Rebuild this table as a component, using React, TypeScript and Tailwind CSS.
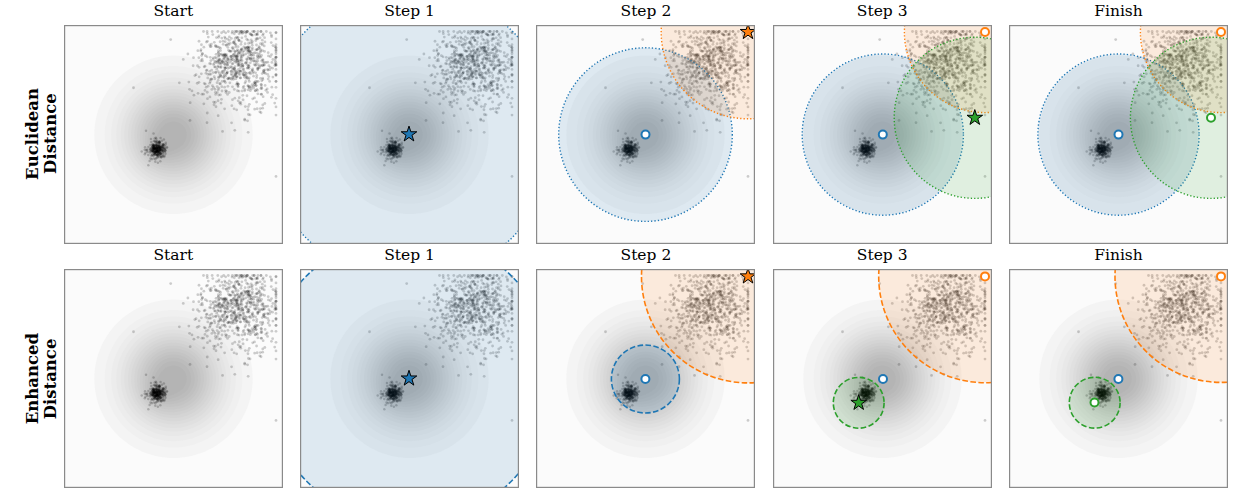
import { useId } from 'react'

const BLUE = '#1f77b4'
const ORANGE = '#ff7f0e'
const GREEN = '#2ca02c'

const SIZE = 219
const C = { x: 109.5, y: 109.8 }
const BLOB = { x: 93.5, y: 124.5 }

type Circle = { cx: number; cy: number; r: number; color: string; line: 'dot' | 'dash' }
type Marker = { x: number; y: number; color: string; kind: 'star' | 'ring' }
type PanelSpec = { title: string; circles: Circle[]; markers: Marker[] }

// seeded random so every render draws the same cloud
const mulberry = (seed: number) => () => {
  seed |= 0
  seed = (seed + 0x6d2b79f5) | 0
  let t = Math.imul(seed ^ (seed >>> 15), 1 | seed)
  t = (t + Math.imul(t ^ (t >>> 7), 61 | t)) ^ t
  return ((t ^ (t >>> 14)) >>> 0) / 4294967296
}
const rand = mulberry(7)
const gauss = () => {
  const u = Math.max(rand(), 1e-9)
  const v = rand()
  return Math.sqrt(-2 * Math.log(u)) * Math.cos(2 * Math.PI * v)
}

const clampX = (x: number) => Math.min(212, Math.max(7, x))
const clampY = (y: number) => Math.max(6.5, Math.min(212, y))

const cloud: [number, number][] = []
for (let i = 0; i < 660; i++) {
  cloud.push([clampX(175 + gauss() * 19), clampY(41 + gauss() * 20)])
}
for (let i = 0; i < 80; i++) {
  cloud.push([clampX(168 + gauss() * 30), clampY(50 + gauss() * 30)])
}

const blob: [number, number][] = []
for (let i = 0; i < 280; i++) {
  blob.push([BLOB.x + gauss() * 4, BLOB.y + gauss() * 3.8])
}
for (let i = 0; i < 25; i++) {
  blob.push([BLOB.x + gauss() * 7.5, BLOB.y + gauss() * 7.5])
}

const SIG = 32.8
const field = (x: number, y: number) => {
  const dx = x - C.x
  const dy = y - C.y
  const bx = x - BLOB.x
  const by = y - BLOB.y
  return Math.exp(-(dx * dx + dy * dy) / (2 * SIG * SIG)) + 0.14 * Math.exp(-(bx * bx + by * by) / (2 * 9 * 9))
}

const LEVELS = 17
const rings = Array.from({ length: LEVELS }, (_, i) => {
  const level = (i + 1) / (LEVELS + 1.5)
  let d = ''
  for (let j = 0; j < 120; j++) {
    const a = (j / 120) * Math.PI * 2
    const ux = Math.cos(a)
    const uy = Math.sin(a)
    let r = 130
    while (r > 0 && field(C.x + r * ux, C.y + r * uy) < level) r -= 0.4
    d += `${j === 0 ? 'M' : 'L'}${(C.x + r * ux).toFixed(2)} ${(C.y + r * uy).toFixed(2)}`
  }
  const g = Math.round(255 * (0.955 - (0.955 - 0.705) * (i / (LEVELS - 1))))
  return { d: d + 'Z', fill: `rgb(${g},${g},${g})` }
})

const starPath = (x: number, y: number, R: number) => {
  const r = R * 0.382
  let d = ''
  for (let i = 0; i < 10; i++) {
    const a = -Math.PI / 2 + (i * Math.PI) / 5
    const rr = i % 2 === 0 ? R : r
    d += `${i === 0 ? 'M' : 'L'}${(x + rr * Math.cos(a)).toFixed(2)} ${(y + rr * Math.sin(a)).toFixed(2)}`
  }
  return d + 'Z'
}

const euclid: PanelSpec[] = [
  { title: 'Start', circles: [], markers: [] },
  {
    title: 'Step 1',
    circles: [{ cx: 109, cy: 109.3, r: 146, color: BLUE, line: 'dot' }],
    markers: [{ x: 109, y: 109.3, color: BLUE, kind: 'star' }],
  },
  {
    title: 'Step 2',
    circles: [
      { cx: 109.5, cy: 109.6, r: 86.8, color: BLUE, line: 'dot' },
      { cx: 212, cy: 7, r: 86.8, color: ORANGE, line: 'dot' },
    ],
    markers: [
      { x: 109.5, y: 109.6, color: BLUE, kind: 'ring' },
      { x: 212, y: 7, color: ORANGE, kind: 'star' },
    ],
  },
  {
    title: 'Step 3',
    circles: [
      { cx: 109.8, cy: 109.6, r: 80.6, color: BLUE, line: 'dot' },
      { cx: 212, cy: 7, r: 80.6, color: ORANGE, line: 'dot' },
      { cx: 201.8, cy: 92.8, r: 80.6, color: GREEN, line: 'dot' },
    ],
    markers: [
      { x: 109.8, y: 109.6, color: BLUE, kind: 'ring' },
      { x: 212, y: 7, color: ORANGE, kind: 'ring' },
      { x: 201.8, y: 92.8, color: GREEN, kind: 'star' },
    ],
  },
  {
    title: 'Finish',
    circles: [
      { cx: 109.5, cy: 109.6, r: 80.6, color: BLUE, line: 'dot' },
      { cx: 212, cy: 7, r: 80.6, color: ORANGE, line: 'dot' },
      { cx: 202, cy: 92.8, r: 80.6, color: GREEN, line: 'dot' },
    ],
    markers: [
      { x: 109.5, y: 109.6, color: BLUE, kind: 'ring' },
      { x: 212, y: 7, color: ORANGE, kind: 'ring' },
      { x: 202, y: 92.8, color: GREEN, kind: 'ring' },
    ],
  },
]

const enhanced: PanelSpec[] = [
  { title: 'Start', circles: [], markers: [] },
  {
    title: 'Step 1',
    circles: [{ cx: 109, cy: 109.5, r: 145, color: BLUE, line: 'dash' }],
    markers: [{ x: 109, y: 109.5, color: BLUE, kind: 'star' }],
  },
  {
    title: 'Step 2',
    circles: [
      { cx: 109.4, cy: 110, r: 34, color: BLUE, line: 'dash' },
      { cx: 212, cy: 7.4, r: 106.5, color: ORANGE, line: 'dash' },
    ],
    markers: [
      { x: 109.4, y: 110, color: BLUE, kind: 'ring' },
      { x: 212, y: 7.4, color: ORANGE, kind: 'star' },
    ],
  },
  {
    title: 'Step 3',
    circles: [
      { cx: 212, cy: 7.4, r: 106.3, color: ORANGE, line: 'dash' },
      { cx: 85.7, cy: 133.8, r: 25.4, color: GREEN, line: 'dash' },
    ],
    markers: [
      { x: 110, y: 110, color: BLUE, kind: 'ring' },
      { x: 212, y: 7.4, color: ORANGE, kind: 'ring' },
      { x: 85.7, y: 133.8, color: GREEN, kind: 'star' },
    ],
  },
  {
    title: 'Finish',
    circles: [
      { cx: 212, cy: 7.4, r: 106, color: ORANGE, line: 'dash' },
      { cx: 85.7, cy: 133.7, r: 25.4, color: GREEN, line: 'dash' },
    ],
    markers: [
      { x: 109.4, y: 110, color: BLUE, kind: 'ring' },
      { x: 212, y: 7.4, color: ORANGE, kind: 'ring' },
      { x: 85.5, y: 133.5, color: GREEN, kind: 'ring' },
    ],
  },
]

const Panel = ({ spec }: { spec: PanelSpec }) => {
  const clip = useId()
  return (
    <div className="flex w-[219px] shrink-0 flex-col">
      <div className="flex h-[24.5px] items-start justify-center pt-[3.5px] text-[15.5px] leading-none">
        {spec.title}
      </div>
      <svg width={SIZE} height={SIZE} viewBox={`0 0 ${SIZE} ${SIZE}`} className="block">
        <defs>
          <clipPath id={clip}>
            <rect x={0} y={0} width={SIZE} height={SIZE} />
          </clipPath>
        </defs>
        <g clipPath={`url(#${clip})`}>
          <rect x={0} y={0} width={SIZE} height={SIZE} fill="#fbfbfb" />
          {rings.map((ring, i) => (
            <path key={i} d={ring.d} fill={ring.fill} />
          ))}
          <g fill="#000" fillOpacity={0.19}>
            {cloud.map(([x, y], i) => (
              <circle key={i} cx={x} cy={y} r={1.4} />
            ))}
          </g>
          <g fill="#000" fillOpacity={0.2}>
            {blob.map(([x, y], i) => (
              <circle key={i} cx={x} cy={y} r={1.25} />
            ))}
          </g>
          {spec.circles.map((c, i) => (
            <circle
              key={i}
              cx={c.cx}
              cy={c.cy}
              r={c.r}
              fill={c.color}
              fillOpacity={0.13}
              stroke={c.color}
              strokeWidth={c.line === 'dot' ? 1.4 : 1.6}
              strokeDasharray={c.line === 'dot' ? '1.3 2.1' : '5.6 2.4'}
            />
          ))}
          {spec.markers.map((m, i) =>
            m.kind === 'star' ? (
              <path key={i} d={starPath(m.x, m.y, 8.2)} fill={m.color} stroke="#000" strokeWidth={1} strokeLinejoin="miter" />
            ) : (
              <circle key={i} cx={m.x} cy={m.y} r={4} fill="#fff" stroke={m.color} strokeWidth={2} />
            ),
          )}
        </g>
        <rect x={0.6} y={0.6} width={SIZE - 1.2} height={SIZE - 1.2} fill="none" stroke="#8a8a8a" strokeWidth={1.2} />
      </svg>
    </div>
  )
}

const Row = ({ label, panels }: { label: [string, string]; panels: PanelSpec[] }) => (
  <div className="flex">
    <div className="flex w-[63.8px] shrink-0 pt-[24.5px]">
      <div className="flex h-[219px] w-full items-center justify-center pl-[20px]">
        <div className="rotate-180 text-center text-[16.5px] font-bold leading-[18px] [writing-mode:vertical-rl]">
          {label[0]}
          <br />
          {label[1]}
        </div>
      </div>
    </div>
    <div className="flex gap-[17.3px]">
      {panels.map((p, i) => (
        <Panel key={i} spec={p} />
      ))}
    </div>
  </div>
)

export default function App() {
  return (
    <div className="h-[502px] w-[1240px] overflow-hidden bg-white font-['DejaVu_Serif',serif] text-black">
      <Row label={['Euclidean', 'Distance']} panels={euclid} />
      <div className="mt-[1.3px]">
        <Row label={['Enhanced', 'Distance']} panels={enhanced} />
      </div>
    </div>
  )
}
